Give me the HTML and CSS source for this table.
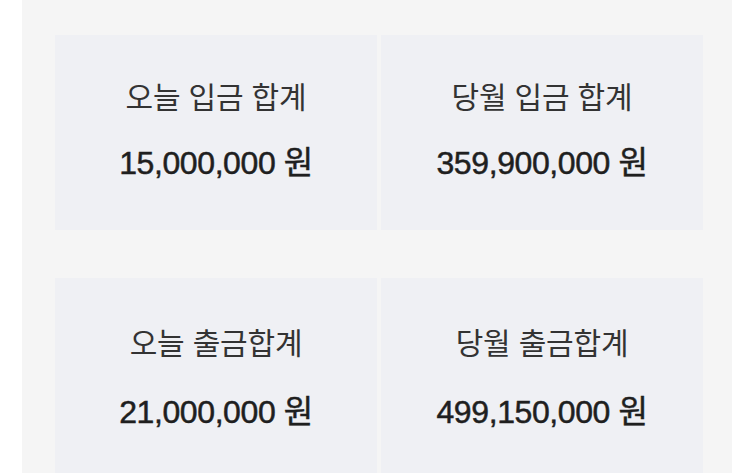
FILE: index.html
```html
<!DOCTYPE html>
<html lang="ko">
<head>
<meta charset="utf-8">
<title>입출금 합계</title>
<link rel="stylesheet" href="styles.css">
</head>
<body>
<main class="panel">
  <section class="row">
    <div class="card">
      <div class="title">오늘 입금 합계</div>
      <div class="value">15,000,000 원</div>
    </div>
    <div class="card">
      <div class="title">당월 입금 합계</div>
      <div class="value">359,900,000 원</div>
    </div>
  </section>
  <section class="row row-second">
    <div class="card">
      <div class="title">오늘 출금합계</div>
      <div class="value">21,000,000 원</div>
    </div>
    <div class="card">
      <div class="title">당월 출금합계</div>
      <div class="value">499,150,000 원</div>
    </div>
  </section>
</main>
</body>
</html>
```

FILE: styles.css
```css
html, body {
  margin: 0;
  padding: 0;
  background: #ffffff;
}

.panel {
  margin-left: 22px;
  width: 710px;
  height: 473px;
  background: #f5f5f5;
  box-sizing: border-box;
  padding: 35px 0 0 33px;
  display: flex;
  flex-direction: column;
  gap: 48px;
}

.row {
  display: grid;
  grid-template-columns: 322px 322px;
  column-gap: 4px;
  height: 195px;
}

.card {
  background: #eff0f4;
  display: flex;
  flex-direction: column;
  align-items: center;
  padding-top: 42px;
  box-sizing: border-box;
}

.row-second .card {
  padding-top: 45px;
}

.title {
  font-family: "Noto Sans CJK KR", "Noto Sans", sans-serif;
  font-size: 30px;
  line-height: 1.2;
  color: #333333;
  letter-spacing: -0.2px;
}

.value {
  margin-top: 31px;
  font-family: "Liberation Sans", "Noto Sans CJK KR", sans-serif;
  font-size: 32px;
  line-height: 1.2;
  color: #1f1f1f;
  letter-spacing: -0.4px;
  -webkit-text-stroke: 0.5px #1f1f1f;
}

.row-second .value {
  margin-top: 34px;
}
```
